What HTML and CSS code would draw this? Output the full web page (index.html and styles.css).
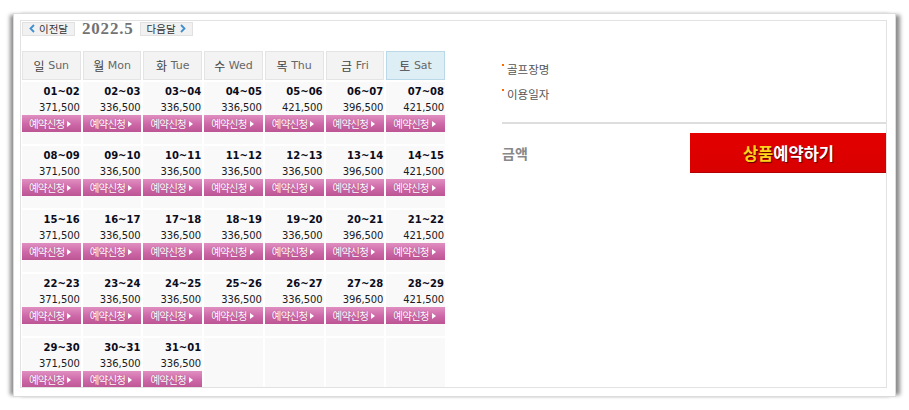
FILE: index.html
```html
<!DOCTYPE html>
<html lang="ko">
<head>
<meta charset="utf-8">
<title>예약</title>
<link rel="stylesheet" href="styles.css">
</head>
<body>
<div class="frame">
  <div class="panel">
    <div class="cal">
      <div class="nav">
        <span class="navbtn"><svg class="chev" width="6" height="9" viewBox="0 0 6 9"><path d="M5 1 L1.5 4.5 L5 8" fill="none" stroke="#3f8fd0" stroke-width="1.8"/></svg>이전달</span>
        <span class="month">2022.5</span>
        <span class="navbtn">다음달<svg class="chev" width="6" height="9" viewBox="0 0 6 9"><path d="M1 1 L4.5 4.5 L1 8" fill="none" stroke="#3f8fd0" stroke-width="1.8"/></svg></span>
      </div>
      <div class="grid">
        <div class="hd"><b>일</b> Sun</div>
        <div class="hd"><b>월</b> Mon</div>
        <div class="hd"><b>화</b> Tue</div>
        <div class="hd"><b>수</b> Wed</div>
        <div class="hd"><b>목</b> Thu</div>
        <div class="hd"><b>금</b> Fri</div>
        <div class="hd sat"><b>토</b> Sat</div>

        <div class="day"><div class="dt">01~02</div><div class="pr">371,500</div><span class="bk">예약신청<i></i></span></div>
        <div class="day"><div class="dt">02~03</div><div class="pr">336,500</div><span class="bk">예약신청<i></i></span></div>
        <div class="day"><div class="dt">03~04</div><div class="pr">336,500</div><span class="bk">예약신청<i></i></span></div>
        <div class="day"><div class="dt">04~05</div><div class="pr">336,500</div><span class="bk">예약신청<i></i></span></div>
        <div class="day"><div class="dt">05~06</div><div class="pr">421,500</div><span class="bk">예약신청<i></i></span></div>
        <div class="day"><div class="dt">06~07</div><div class="pr">396,500</div><span class="bk">예약신청<i></i></span></div>
        <div class="day"><div class="dt">07~08</div><div class="pr">421,500</div><span class="bk">예약신청<i></i></span></div>

        <div class="day"><div class="dt">08~09</div><div class="pr">371,500</div><span class="bk">예약신청<i></i></span></div>
        <div class="day"><div class="dt">09~10</div><div class="pr">336,500</div><span class="bk">예약신청<i></i></span></div>
        <div class="day"><div class="dt">10~11</div><div class="pr">336,500</div><span class="bk">예약신청<i></i></span></div>
        <div class="day"><div class="dt">11~12</div><div class="pr">336,500</div><span class="bk">예약신청<i></i></span></div>
        <div class="day"><div class="dt">12~13</div><div class="pr">336,500</div><span class="bk">예약신청<i></i></span></div>
        <div class="day"><div class="dt">13~14</div><div class="pr">396,500</div><span class="bk">예약신청<i></i></span></div>
        <div class="day"><div class="dt">14~15</div><div class="pr">421,500</div><span class="bk">예약신청<i></i></span></div>

        <div class="day"><div class="dt">15~16</div><div class="pr">371,500</div><span class="bk">예약신청<i></i></span></div>
        <div class="day"><div class="dt">16~17</div><div class="pr">336,500</div><span class="bk">예약신청<i></i></span></div>
        <div class="day"><div class="dt">17~18</div><div class="pr">336,500</div><span class="bk">예약신청<i></i></span></div>
        <div class="day"><div class="dt">18~19</div><div class="pr">336,500</div><span class="bk">예약신청<i></i></span></div>
        <div class="day"><div class="dt">19~20</div><div class="pr">336,500</div><span class="bk">예약신청<i></i></span></div>
        <div class="day"><div class="dt">20~21</div><div class="pr">396,500</div><span class="bk">예약신청<i></i></span></div>
        <div class="day"><div class="dt">21~22</div><div class="pr">421,500</div><span class="bk">예약신청<i></i></span></div>

        <div class="day"><div class="dt">22~23</div><div class="pr">371,500</div><span class="bk">예약신청<i></i></span></div>
        <div class="day"><div class="dt">23~24</div><div class="pr">336,500</div><span class="bk">예약신청<i></i></span></div>
        <div class="day"><div class="dt">24~25</div><div class="pr">336,500</div><span class="bk">예약신청<i></i></span></div>
        <div class="day"><div class="dt">25~26</div><div class="pr">336,500</div><span class="bk">예약신청<i></i></span></div>
        <div class="day"><div class="dt">26~27</div><div class="pr">336,500</div><span class="bk">예약신청<i></i></span></div>
        <div class="day"><div class="dt">27~28</div><div class="pr">396,500</div><span class="bk">예약신청<i></i></span></div>
        <div class="day"><div class="dt">28~29</div><div class="pr">421,500</div><span class="bk">예약신청<i></i></span></div>

        <div class="day"><div class="dt">29~30</div><div class="pr">371,500</div><span class="bk">예약신청<i></i></span></div>
        <div class="day"><div class="dt">30~31</div><div class="pr">336,500</div><span class="bk">예약신청<i></i></span></div>
        <div class="day"><div class="dt">31~01</div><div class="pr">336,500</div><span class="bk">예약신청<i></i></span></div>
        <div class="day"></div>
        <div class="day"></div>
        <div class="day"></div>
        <div class="day"></div>
      </div>
    </div>
    <div class="side">
      <div class="info"><span class="dot"></span>골프장명</div>
      <div class="info"><span class="dot"></span>이용일자</div>
      <div class="rule"></div>
      <div class="total">
        <span class="amt">금액</span>
        <span class="rsv"><em>상품</em>예약하기</span>
      </div>
    </div>
  </div>
</div>
</body>
</html>
```

FILE: styles.css
```css
html, body {
  margin: 0;
  padding: 0;
  background: #fff;
}
body {
  padding: 13px;
  font-family: "DejaVu Sans", "Noto Sans CJK KR", sans-serif;
}
.frame {
  width: 867px;
  height: 368px;
  padding: 6px 8px 8px 6px;
  border: 1px solid #dcdcdc;
  background: #fff;
  box-shadow: -5px 0 4px -2px rgba(0,0,0,0.45), 6px 0 4px -2px rgba(0,0,0,0.45);
}
.panel {
  box-sizing: border-box;
  width: 867px;
  height: 368px;
  border: 1px solid #e2e2e2;
  overflow: hidden;
  display: flex;
  padding-left: 1px;
}
.cal {
  width: 423px;
  flex: none;
}
.nav {
  display: flex;
  align-items: center;
  height: 15px;
}
.navbtn {
  box-sizing: border-box;
  height: 14px;
  width: 53px;
  display: flex;
  align-items: center;
  justify-content: center;
  gap: 4px;
  background: #f1f1f1;
  border: 1px solid #e1e1e1;
  font-family: "Noto Sans CJK KR", sans-serif;
  font-size: 10.5px;
  color: #333;
  line-height: 12px;
}
.chev { display: block; }
.month {
  font-family: "Liberation Serif", serif;
  font-weight: bold;
  font-size: 17px;
  letter-spacing: 0.8px;
  color: #737373;
  margin: 0 6px 0 7px;
  line-height: 15px;
}
.grid {
  margin-top: 15px;
  display: grid;
  grid-template-columns: repeat(7, 1fr);
  grid-template-rows: 29px repeat(5, 62px);
  gap: 2px;
}
.hd {
  box-sizing: border-box;
  background: #f3f3f3;
  border: 1px solid #e4e4e4;
  display: flex;
  align-items: center;
  justify-content: center;
  font-size: 11px;
  color: #666;
  white-space: pre;
}
.hd b {
  font-family: "Noto Sans CJK KR", sans-serif;
  font-weight: normal;
  font-size: 12px;
  color: #444;
}
.hd.sat {
  background: #deeef5;
  border-color: #b9d9e8;
}
.day {
  background: #f9f9f9;
  padding-top: 2px;
  text-align: right;
}
.dt {
  font-weight: bold;
  font-size: 10px;
  line-height: 16px;
  color: #0b0b1a;
  padding-right: 1px;
}
.pr {
  font-size: 10px;
  line-height: 15px;
  color: #1a1a22;
  padding-right: 1px;
  letter-spacing: -0.1px;
}
.bk {
  display: flex;
  align-items: center;
  height: 17px;
  padding-left: 7px;
  background: linear-gradient(#e08fc1, #cd67a7 55%, #bd5594);
  color: #fff;
  font-family: "Noto Sans CJK KR", sans-serif;
  font-size: 10.5px;
  letter-spacing: -0.8px;
  text-shadow: 0 0 1px rgba(120,20,80,0.5);
  text-align: left;
}
.bk i {
  display: inline-block;
  width: 0;
  height: 0;
  margin-left: 3px;
  border-left: 4px solid #fff;
  border-top: 3px solid transparent;
  border-bottom: 3px solid transparent;
}
.side {
  flex: 1;
  margin-left: 57px;
  padding-top: 35px;
}
.info {
  display: flex;
  align-items: center;
  height: 25px;
  font-family: "Noto Sans CJK KR", sans-serif;
  font-size: 11.5px;
  color: #555;
}
.dot {
  width: 2px;
  height: 2px;
  background: #ff6a00;
  margin-right: 3px;
  align-self: flex-start;
  margin-top: 8px;
}
.rule {
  margin-top: 16px;
  height: 2px;
  background: #dedede;
  margin-right: -1px;
}
.total {
  margin-top: 9px;
  display: flex;
  align-items: center;
  justify-content: space-between;
  margin-right: -1px;
}
.amt {
  font-family: "Noto Sans CJK KR", sans-serif;
  font-weight: bold;
  font-size: 14px;
  color: #888;
}
.rsv {
  box-sizing: border-box;
  width: 197px;
  height: 40px;
  display: flex;
  align-items: center;
  justify-content: center;
  background: linear-gradient(#e40000, #d80000);
  border-bottom: 1px solid #b30000;
  color: #fff;
  font-family: "Noto Sans CJK KR", sans-serif;
  font-weight: bold;
  font-size: 16.5px;
  letter-spacing: 0;
  text-shadow: 1px 1px 1px #5a0000;
}
.rsv em {
  font-style: normal;
  color: #ffd21c;
}
```
